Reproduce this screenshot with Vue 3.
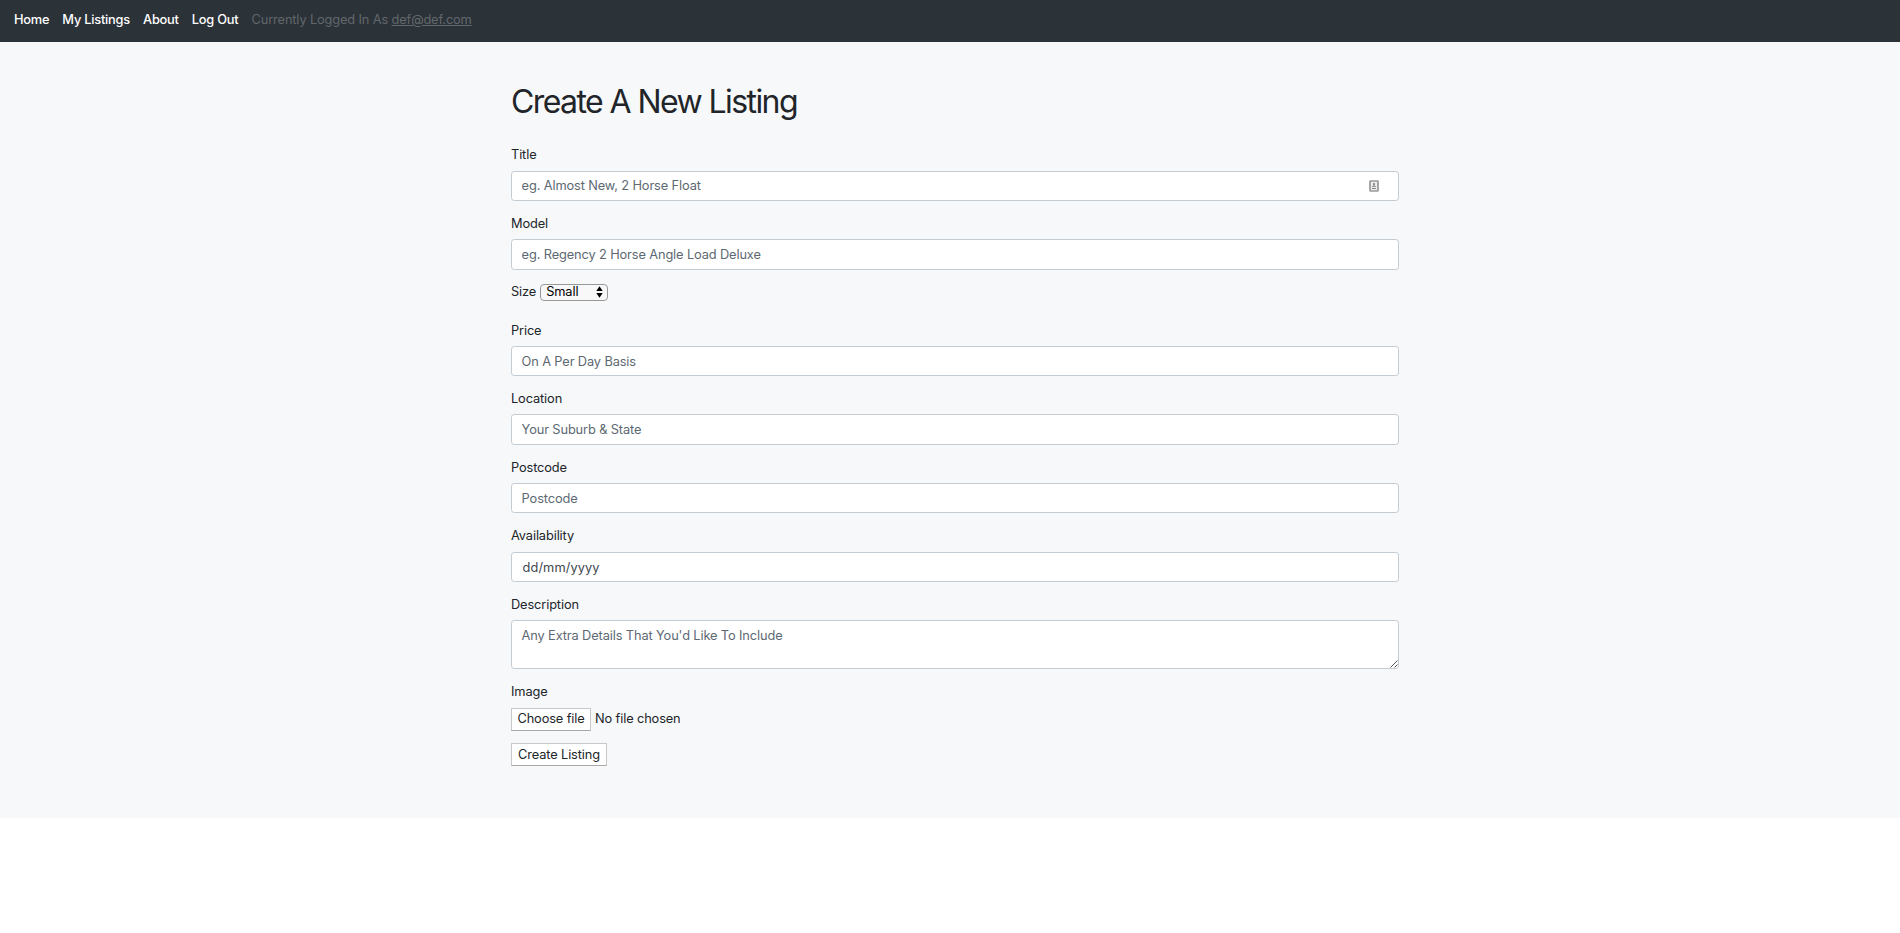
<script setup>
const before = [
  { id: 'title', label: 'Title', hint: 'eg. Almost New, 2 Horse Float', badge: true },
  { id: 'model', label: 'Model', hint: 'eg. Regency 2 Horse Angle Load Deluxe' },
]
const after = [
  { id: 'price', label: 'Price', hint: 'On A Per Day Basis', low: true },
  { id: 'location', label: 'Location', hint: 'Your Suburb & State' },
  { id: 'postcode', label: 'Postcode', hint: 'Postcode' },
  { id: 'availability', label: 'Availability', hint: 'dd/mm/yyyy', date: true },
]
</script>

<template>
  <nav class="navbar">
    <a class="link">Home</a>
    <a class="link">My Listings</a>
    <a class="link">About</a>
    <a class="link">Log Out</a>
    <span class="session">Currently Logged In As <u>def@def.com</u></span>
  </nav>
  <main class="page">
    <form class="form" @submit.prevent>
      <h1>Create A New Listing</h1>
      <div v-for="f in before" :key="f.id" class="group">
        <label :for="f.id">{{ f.label }}</label>
        <div class="box">
          <input :id="f.id" class="control" type="text" :placeholder="f.hint" />
          <svg v-if="f.badge" class="badge" viewBox="0 0 10 12">
            <rect x="1" y="1" width="8" height="10" rx="0.6" fill="#ececec" stroke="#999" stroke-width="1.7" />
            <circle cx="5" cy="4" r="1" fill="#777" />
            <path d="M4.4 4h1.2v2.6H4.4zM3 6.2h4v.9H3zM3 8h4v1H3z" fill="#888" />
          </svg>
        </div>
      </div>
      <div class="size">
        <span class="size-label">Size</span>
        <div class="select">
          <span>Small</span>
          <svg width="7" height="12" viewBox="0 0 7 12"><path d="M3.5 0.2 6.7 5H.3zM3.5 11.8 6.7 7H.3z" fill="#000" /></svg>
        </div>
      </div>
      <div v-for="f in after" :key="f.id" class="group" :class="{ low: f.low }">
        <label :for="f.id">{{ f.label }}</label>
        <input :id="f.id" class="control" :class="{ date: f.date }" type="text" :placeholder="f.hint" />
      </div>
      <div class="group">
        <label for="description">Description</label>
        <div class="box">
          <textarea id="description" class="control area" placeholder="Any Extra Details That You'd Like To Include"></textarea>
          <svg class="grip" viewBox="0 0 8 8"><path d="M.5 7.5l7-7M4.5 7.5l3-3" stroke="#555" stroke-width="1" fill="none" /></svg>
        </div>
      </div>
      <span class="image-label">Image</span>
      <div class="file">
        <button class="btn choose" type="button">Choose file</button>
        <span class="chosen">No file chosen</span>
      </div>
      <button class="btn create" type="submit">Create Listing</button>
    </form>
  </main>
</template>

<style>
body { background: #fff; }
</style>

<style scoped>
.navbar, .page, .control, .btn {
  font-family: Inter, "Liberation Sans", sans-serif;
  font-size: 12.8px;
  line-height: 19.2px;
  letter-spacing: -0.12px;
  box-sizing: border-box;
}
.navbar {
  display: flex;
  gap: 13.1px;
  height: 42px;
  padding: 10px 14px 0;
  background: #2b3238;
  white-space: nowrap;
}
.link { color: #fff; font-weight: 500; letter-spacing: -0.22px; }
.session { color: #62676c; letter-spacing: -0.13px; }
.page {
  height: 776px;
  padding-top: 41.4px;
  background: #f7f8fa;
  color: #212529;
}
.form { width: 888px; margin-left: 511px; }
h1 {
  margin: 0 0 23.2px;
  font-size: 32px;
  line-height: 38.4px;
  font-weight: 400;
  letter-spacing: -1.58px;
  white-space: nowrap;
}
.group { margin-bottom: 12.7px; }
.group label { display: block; padding-top: 0.3px; margin-bottom: 6.1px; }
.low label { padding-top: 1px; margin-bottom: 5.4px; }
.low .control { padding-top: 5.8px; }
.box { position: relative; display: flex; }
.control {
  display: block;
  width: 100%;
  height: 30.4px;
  margin: 0;
  padding: 4.8px 9.6px;
  border: 1px solid #c3ccd3;
  border-radius: 3.2px;
  background: #fff;
  outline: 0;
}
.control::placeholder { color: #5d6972; opacity: 1; }
.date { padding-left: 10.6px; padding-top: 5.8px; letter-spacing: 0.08px; }
.date::placeholder { color: #40474e; }
.area { height: 48.6px; resize: none; overflow: hidden; }
.badge { position: absolute; right: 20px; top: 9px; width: 10px; height: 12px; }
.grip { position: absolute; right: 1px; bottom: 1px; width: 8px; height: 8px; }
.size { display: flex; align-items: center; gap: 4px; height: 20px; margin: 0 0 17.6px; }
.size-label { padding-bottom: 1.6px; }
.select {
  display: flex;
  align-items: center;
  justify-content: space-between;
  box-sizing: border-box;
  width: 68px;
  height: 17px;
  padding: 0 4px 0 5px;
  border: 1px solid #999;
  border-radius: 4px;
  background: #f8f8f8;
  color: #000;
}
.select span { padding-bottom: 1.6px; }
.image-label { display: block; padding-top: 0.6px; }
.file { display: flex; align-items: center; gap: 4px; margin: 6.6px 0 12px; }
.btn {
  display: block;
  width: 80px;
  height: 23px;
  padding: 0;
  border: 1px solid #c8c8c8;
  border-bottom-color: #a8a8a8;
  border-radius: 0;
  background: #fff;
  color: #212529;
  text-align: center;
  white-space: nowrap;
}
.choose { padding-bottom: 1.6px; }
.chosen { padding-bottom: 1.6px; }
.create { width: 96px; }
</style>
